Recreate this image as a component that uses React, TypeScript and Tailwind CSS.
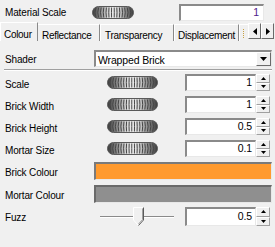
import React from "react";

const Wheel = ({ w }: { w: number }) => {
  const h = 13;
  const c = w / 2;
  const ribs: number[] = [];
  for (let x = 4; x <= w - 4; x += 2.6) ribs.push(x);
  return (
    <svg width={w} height={h} viewBox={`0 0 ${w} ${h}`}>
      <defs>
        <linearGradient id={`wg${w}`} x1="0" y1="0" x2="1" y2="0">
          <stop offset="0" stopColor="#3a3a3a" />
          <stop offset="0.35" stopColor="#d0d0d0" />
          <stop offset="0.5" stopColor="#f0f0f0" />
          <stop offset="0.65" stopColor="#d0d0d0" />
          <stop offset="1" stopColor="#3a3a3a" />
        </linearGradient>
      </defs>
      <rect x="0.5" y="0.5" width={w - 1} height={h - 1} rx="6" fill={`url(#wg${w})`} stroke="#5a5a5a" />
      {ribs.map((x, i) => {
        const k = ((x - c) / c) * 2.5;
        return (
          <path
            key={i}
            d={`M${x} 1.5 Q${x + k} ${h / 2} ${x} ${h - 1.5}`}
            stroke="#454545"
            strokeWidth="1"
            fill="none"
          />
        );
      })}
    </svg>
  );
};

const Spin = () => (
  <div className="flex flex-col w-[14px] h-full">
    {[0, 1].map((i) => (
      <div
        key={i}
        className="flex-1 flex items-center justify-center bg-[#f0f0f0] border border-t-white border-l-white border-b-[#a0a0a0] border-r-[#a0a0a0]"
      >
        <svg width="5" height="3" viewBox="0 0 5 3">
          {i === 0 ? <path d="M0 3 L2.5 0 L5 3 Z" fill="#000" /> : <path d="M0 0 L2.5 3 L5 0 Z" fill="#000" />}
        </svg>
      </div>
    ))}
  </div>
);

const NumBox = ({ v, h = 17 }: { v: string; h?: number }) => (
  <div className="flex w-[85px]" style={{ height: h }}>
    <div className="flex-1 bg-white border-t-2 border-l-2 border-t-[#8a8a8a] border-l-[#8a8a8a] border-b border-r border-b-[#e8e8e8] border-r-[#e8e8e8] flex items-center justify-end pr-[3px] text-[10.5px] text-black">
      {v}
    </div>
    <Spin />
  </div>
);

const Row = ({ label, v }: { label: string; v: string }) => (
  <div className="flex items-center h-[17px] mb-[5px]">
    <div className="w-[107px] pl-[5px] pt-[3px]">{label}</div>
    <div className="w-[78px]">
      <Wheel w={51} />
    </div>
    <NumBox v={v} />
  </div>
);

export default function App() {
  return (
    <div
      className="w-[275px] h-[247px] bg-[#f0f0f0] overflow-hidden text-[10px] text-black tracking-[-0.15px]"
      style={{ fontFamily: '"Liberation Sans", Arial, sans-serif' }}
    >
      {/* material scale */}
      <div className="flex items-center h-[17px] mt-[4px]">
        <div className="w-[92px] pl-[5px]">Material Scale</div>
        <div className="w-[87px]">
          <Wheel w={42} />
        </div>
        <div className="w-[85px] h-[17px] bg-white border-t-2 border-l-2 border-t-[#8a8a8a] border-l-[#8a8a8a] border-b border-r border-b-[#e8e8e8] border-r-[#e8e8e8] flex items-center justify-end pr-[4px] text-[10.5px] text-[#50208a]">
          1
        </div>
      </div>

      {/* tabs */}
      <div className="flex h-[19px] mt-[1px] items-end whitespace-nowrap tracking-[-0.3px]">
        <div className="h-[19px] w-[38px] pl-[3px] pt-[4px] border-t border-l border-t-white border-l-white border-r border-r-[#8a8a8a] overflow-hidden">
          Colour
        </div>
        <div className="h-[17px] w-[62px] pl-[4px] pt-[3px] border-t border-t-white border-r border-r-[#8a8a8a] overflow-hidden">
          Reflectance
        </div>
        <div className="h-[17px] w-[74px] pl-[4px] pt-[3px] border-t border-l border-t-white border-l-white border-r border-r-[#8a8a8a] overflow-hidden">
          Transparency
        </div>
        <div className="h-[17px] w-[65px] pl-[3px] pt-[3px] border-t border-l border-t-white border-l-white border-r border-r-[#8a8a8a] overflow-hidden">
          Displacement
        </div>
        <div className="h-[17px] w-[9px] border-t border-l border-t-white border-l-white flex items-center pl-[3px]">
          <div className="w-px h-[9px] border-l border-dotted border-[#c8a040]" />
        </div>
        <div className="flex h-[16px] self-start mt-[1px]">
          {["l", "r"].map((d) => (
            <div
              key={d}
              className="w-[13px] h-[16px] flex items-center justify-center bg-[#f0f0f0] border border-t-white border-l-white border-b-[#6a6a6a] border-r-[#6a6a6a]"
            >
              <svg width="4" height="7" viewBox="0 0 4 7">
                {d === "l" ? <path d="M4 0 L0 3.5 L4 7 Z" fill="#000" /> : <path d="M0 0 L4 3.5 L0 7 Z" fill="#000" />}
              </svg>
            </div>
          ))}
        </div>
      </div>

      {/* shader */}
      <div className="flex items-center h-[17px] mt-[9px]">
        <div className="w-[94px] pl-[5px] pt-[2px]">Shader</div>
        <div className="w-[178px] h-[17px] flex bg-white border-t-2 border-l-2 border-t-[#8a8a8a] border-l-[#8a8a8a] border-b border-r border-b-[#e8e8e8] border-r-[#e8e8e8]">
          <div className="flex-1 pl-[2px] pt-[1px] text-[10.5px]">Wrapped Brick</div>
          <div className="w-[15px] h-full flex items-center justify-center bg-[#f0f0f0] border border-t-white border-l-white border-b-[#6a6a6a] border-r-[#6a6a6a]">
            <svg width="7" height="4" viewBox="0 0 7 4">
              <path d="M0 0 L7 0 L3.5 4 Z" fill="#000" />
            </svg>
          </div>
        </div>
      </div>

      {/* separator */}
      <div className="mx-[4px] mt-[2px] w-[268px] border-t border-t-[#a0a0a0] border-b border-b-white" />

      <div className="mt-[3px]">
        <Row label="Scale" v="1" />
        <Row label="Brick Width" v="1" />
        <Row label="Brick Height" v="0.5" />
        <Row label="Mortar Size" v="0.1" />
      </div>

      {/* colours */}
      <div className="flex items-center h-[18px] mt-[1px]">
        <div className="w-[94px] pl-[5px] pt-[2px]">Brick Colour</div>
        <div className="w-[178px] h-[18px] bg-[#ff9a2e] border-t-2 border-l-2 border-t-[#7a7a7a] border-l-[#7a7a7a] border-b border-r border-b-[#e8e8e8] border-r-[#e8e8e8]" />
      </div>
      <div className="flex items-center h-[18px] mt-[5px]">
        <div className="w-[94px] pl-[5px] pt-[2px]">Mortar Colour</div>
        <div className="w-[178px] h-[18px] bg-[#8f8f8f] border-t-2 border-l-2 border-t-[#6a6a6a] border-l-[#6a6a6a] border-b border-r border-b-[#e8e8e8] border-r-[#e8e8e8]" />
      </div>

      {/* fuzz */}
      <div className="flex items-center h-[19px] mt-[4px]">
        <div className="w-[100px] pl-[5px] pt-[2px]">Fuzz</div>
        <div className="w-[85px] h-[19px] relative">
          <div className="absolute left-0 top-[9px] w-[74px] border-t border-t-[#8a8a8a] border-b border-b-white" />
          <svg className="absolute left-[33px] top-0" width="11" height="19" viewBox="0 0 11 19">
            <path d="M0.5 0.5 H10.5 V13 L5.5 18.5 L0.5 13 Z" fill="#f0f0f0" stroke="#ffffff" />
            <path d="M10.5 0.5 V13 L5.5 18.5" fill="none" stroke="#5a5a5a" />
            <path d="M9.5 1.5 V12.6 L5.5 17" fill="none" stroke="#a0a0a0" />
          </svg>
        </div>
        <NumBox v="0.5" h={19} />
      </div>
    </div>
  );
}
